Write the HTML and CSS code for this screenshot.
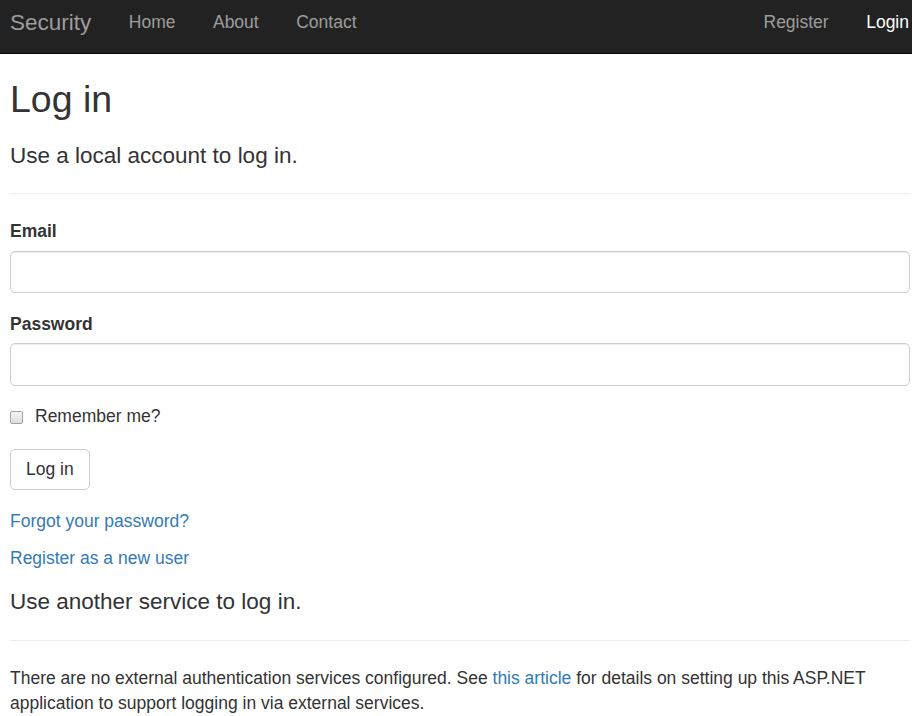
FILE: index.html
```html
<!DOCTYPE html>
<html lang="en">
<head>
<meta charset="utf-8">
<title>Log in - Security</title>
<link rel="stylesheet" href="styles.css">
</head>
<body>
<header class="navbar">
  <a class="brand" href="#">Security</a>
  <ul class="nav">
    <li><a href="#">Home</a></li>
    <li><a href="#">About</a></li>
    <li><a href="#">Contact</a></li>
  </ul>
  <ul class="nav nav-right">
    <li><a href="#">Register</a></li>
    <li><a class="active" href="#">Login</a></li>
  </ul>
</header>
<main class="main">
  <h2 class="page-title">Log in</h2>
  <section class="local">
    <form class="login-form">
      <h4 class="section-title first">Use a local account to log in.</h4>
      <hr class="divider">
      <div class="form-group">
        <label class="field-label" for="email">Email</label>
        <input class="form-control" id="email" type="email">
      </div>
      <div class="form-group">
        <label class="field-label" for="password">Password</label>
        <input class="form-control" id="password" type="password">
      </div>
      <div class="form-group">
        <div class="checkbox">
          <label class="check-label"><input class="check" type="checkbox">Remember me?</label>
        </div>
      </div>
      <div class="form-group">
        <button class="btn" type="submit">Log in</button>
      </div>
      <div class="form-group">
        <p class="link-line"><a href="#">Forgot your password?</a></p>
        <p class="link-line"><a href="#">Register as a new user</a></p>
      </div>
    </form>
  </section>
  <section class="external">
    <h4 class="section-title">Use another service to log in.</h4>
    <hr class="divider">
    <p class="note">There are no external authentication services configured. See <a href="#">this article</a> for details on setting up this ASP.NET application to support logging in via external services.</p>
  </section>
</main>
</body>
</html>
```
FILE: styles.css
```css
html, body {
  margin: 0;
  padding: 0;
  background: #fff;
}
body {
  font-family: "Liberation Sans", Arial, Helvetica, sans-serif;
  font-size: 17.5px;
  line-height: 25px;
  color: #333;
}
a {
  color: #337ab7;
  text-decoration: none;
}

/* navbar */
.navbar {
  display: flex;
  align-items: flex-start;
  height: 54px;
  box-sizing: border-box;
  padding: 10px 0 0 10px;
  background: #222;
  border-bottom: 1px solid #080808;
}
.brand {
  font-size: 22.5px;
  line-height: 25px;
  color: #9d9d9d;
  padding-right: 18.75px;
}
.nav {
  display: flex;
  list-style: none;
  margin: 0;
  padding: 0;
}
.nav a {
  display: block;
  padding: 0 18.75px;
  line-height: 25px;
  color: #9d9d9d;
}
.nav-right {
  margin-left: auto;
}
.nav-right li:last-child a {
  padding-right: 3px;
}
.nav a.active {
  color: #fff;
}

/* content */
.main {
  padding: 0 2px 0 10px;
}
.page-title {
  font-size: 37.5px;
  font-weight: 400;
  line-height: 41.25px;
  margin: 25px 0 12.5px;
}
.section-title {
  font-size: 22.5px;
  font-weight: 400;
  line-height: 24.75px;
  margin: 12.5px 0 12.5px;
}
.section-title.first {
  margin-top: 23.25px;
}
.divider {
  margin: 25px 0;
  border: 0;
  border-top: 1px solid #eee;
  height: 0;
}
.login-form {
  margin: 0;
}
.form-group {
  margin-bottom: 18.75px;
}
.field-label {
  display: inline-block;
  font-weight: 700;
  margin-bottom: 6.25px;
}
.form-control {
  display: block;
  width: 100%;
  height: 42.5px;
  box-sizing: border-box;
  padding: 7.5px 15px;
  font: inherit;
  color: #555;
  background: #fff;
  border: 1px solid #ccc;
  border-radius: 5px;
  box-shadow: inset 0 1px 1px rgba(0, 0, 0, .075);
  margin: 0;
}
.checkbox {
  margin: 12.5px 0;
}
.check-label {
  display: flex;
  align-items: center;
  min-height: 25px;
  font-weight: 400;
}
.check {
  -webkit-appearance: none;
  appearance: none;
  width: 13px;
  height: 13px;
  margin: 1px 12px 0 0;
  box-sizing: border-box;
  border: 1px solid #a3a3a3;
  border-radius: 2px;
  background: linear-gradient(to bottom, #f6f6f6, #dcdcdc);
}
.btn {
  display: inline-block;
  vertical-align: top;
  margin-top: 1px;
  height: 41px;
  padding: 0 15px;
  font: inherit;
  line-height: 39px;
  color: #333;
  background: #fff;
  border: 1px solid #ccc;
  border-radius: 5px;
}
.link-line {
  margin: 0 0 12.5px;
}
.note {
  margin: 0 0 12.5px;
}
```
